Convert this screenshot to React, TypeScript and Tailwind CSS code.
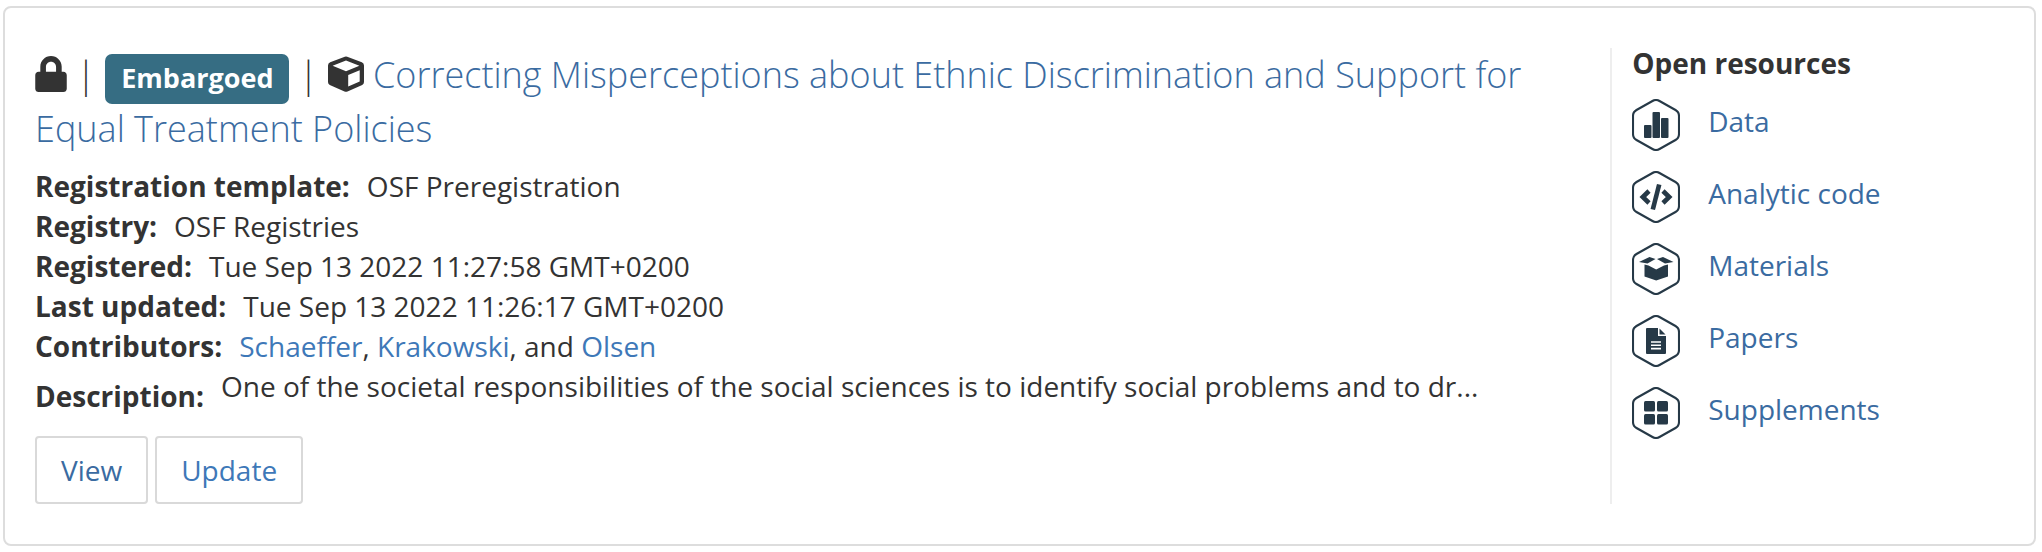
import type { ReactNode } from "react";
import { FaLock } from "react-icons/fa";

const fields = [
  { label: "Registration template:", value: "OSF Preregistration" },
  { label: "Registry:", value: "OSF Registries" },
  { label: "Registered:", value: "Tue Sep 13 2022 11:27:58 GMT+0200" },
  { label: "Last updated:", value: "Tue Sep 13 2022 11:26:17 GMT+0200" },
];

const resources: { name: string; glyph: ReactNode }[] = [
  {
    name: "Data",
    glyph: (
      <>
        <rect x="12" y="26" width="7.5" height="13" rx="1" />
        <rect x="20.5" y="13" width="7.5" height="26" rx="1" />
        <rect x="29" y="19" width="7.5" height="20" rx="1" />
      </>
    ),
  },
  {
    name: "Analytic code",
    glyph: (
      <g fill="none" stroke="#263947">
        <path d="M17 20 L10.8 26 L17 32 M31 20 L37.2 26 L31 32" strokeWidth="4.6" />
        <path d="M27.2 13.5 L20.8 38.5" strokeWidth="4.6" />
      </g>
    ),
  },
  {
    name: "Materials",
    glyph: (
      <>
        <path d="M7 19 L17.5 14 L23.5 16 L15.5 20.5 Z" />
        <path d="M41.5 19 L31 14 L25 16 L33 20.5 Z" />
        <path d="M12.5 21.5 L16.5 22.5 L24.2 26.5 L32 22.5 L36 21.5 V33.5 L24.2 37.5 L12.5 33.5 Z" />
      </>
    ),
  },
  {
    name: "Papers",
    glyph: (
      <>
        <path d="M15 13 H26 V21 H34 V38 a1 1 0 0 1 -1 1 H15 a1 1 0 0 1 -1 -1 V14 a1 1 0 0 1 1 -1 Z" />
        <path d="M27.5 13.5 L33.5 19.5 H27.5 Z" />
        <path d="M19 27 H29 M19 30.3 H29 M19 33.6 H29" stroke="#ffffff" strokeWidth="1.6" />
      </>
    ),
  },
  {
    name: "Supplements",
    glyph: (
      <>
        <rect x="12" y="14" width="11" height="10.5" rx="1.5" />
        <rect x="25" y="14" width="11" height="10.5" rx="1.5" />
        <rect x="12" y="27" width="11" height="10.5" rx="1.5" />
        <rect x="25" y="27" width="11" height="10.5" rx="1.5" />
      </>
    ),
  },
];

function HexIcon({ children }: { children: ReactNode }) {
  return (
    <svg viewBox="0 0 48 52" className="h-[52px] w-12 shrink-0" fill="#263947" aria-hidden="true">
      <path
        d="M20.5 2 Q24 0 27.5 2 L43.5 11 Q47 13 47 17 V35 Q47 39 43.5 41 L27.5 50 Q24 52 20.5 50 L4.5 41 Q1 39 1 35 V17 Q1 13 4.5 11 Z"
        fill="none"
        stroke="#263947"
        strokeWidth="2.1"
      />
      {children}
    </svg>
  );
}

function CubeIcon() {
  return (
    <svg viewBox="0 0 36 36" className="inline h-9 w-9 align-[-4px]" fill="currentColor" aria-hidden="true">
      <path
        fillRule="evenodd"
        d="M16.8 0.7 Q18 0.2 19.2 0.7 L33.8 6.2 Q36 7.2 36 9.6 V26 Q36 28 34.2 29 L19.5 35.4 Q18 36.1 16.5 35.4 L1.8 29 Q0 28 0 26 V9.6 Q0 7.2 2.2 6.2 Z M18 4.6 L4.6 9.7 L18 15.2 L31.4 9.7 Z M20.2 19 V30.4 L31.7 25.4 V14.3 Z"
      />
    </svg>
  );
}

function PersonLink({ children }: { children: ReactNode }) {
  return (
    <a href="#" className="text-[#3e78b8]">
      {children}
    </a>
  );
}

export default function App() {
  return (
    <main className="bg-white pt-[6px] pr-[6px] pb-[6px] pl-[3px] font-['Open_Sans',sans-serif] text-[28px] leading-10 text-[#333333]">
      <article className="flex rounded-lg border-2 border-[#dddddd] py-10 pl-[30px]">
        <div className="min-w-0 flex-1 pr-10">
          <h2 className="pt-[2px] text-4xl leading-[50px] font-light">
            <FaLock className="inline h-9 w-8 align-[-4px]" aria-label="Private" />
            {" | "}
            <span className="inline-block rounded-[7px] bg-[#366d83] px-4 pt-1 pb-[6px] text-[27px] leading-10 font-bold text-white">
              Embargoed
            </span>
            {" | "}
            <CubeIcon />{" "}
            <a href="#" className="text-[#3a6ba1]">
              Correcting Misperceptions about Ethnic Discrimination and Support for Equal Treatment Policies
            </a>
          </h2>
          <dl className="mt-3">
            {fields.map((field) => (
              <div key={field.label} className="flex gap-[17px]">
                <dt className="font-bold">{field.label}</dt>
                <dd>{field.value}</dd>
              </div>
            ))}
            <div className="flex gap-[17px]">
              <dt className="font-bold">Contributors:</dt>
              <dd>
                <PersonLink>Schaeffer</PersonLink>, <PersonLink>Krakowski</PersonLink>, and{" "}
                <PersonLink>Olsen</PersonLink>
              </dd>
            </div>
            <div className="flex gap-[17px]">
              <dt className="pt-[10px] font-bold">Description:</dt>
              <dd className="min-w-0 truncate">
                One of the societal responsibilities of the social sciences is to identify social problems and to dr...
              </dd>
            </div>
          </dl>
          <div className="mt-5 flex gap-[7px]">
            <button type="button" className="rounded border-2 border-[#d9d9d9] px-6 py-3 text-[#3a6ba1]">
              View
            </button>
            <button type="button" className="rounded border-2 border-[#d9d9d9] px-6 py-3 text-[#3e78b8]">
              Update
            </button>
          </div>
        </div>
        <aside className="w-[21.2%] border-l-2 border-[#eeeeee] pl-5">
          <h3 className="leading-[31px] font-bold">Open resources</h3>
          <ul className="mt-5 flex flex-col gap-5">
            {resources.map((resource) => (
              <li key={resource.name}>
                <a href="#" className="flex gap-7 text-[#3a6ba1]">
                  <HexIcon>{resource.glyph}</HexIcon>
                  <span className="pt-[2px]">{resource.name}</span>
                </a>
              </li>
            ))}
          </ul>
        </aside>
      </article>
    </main>
  );
}
